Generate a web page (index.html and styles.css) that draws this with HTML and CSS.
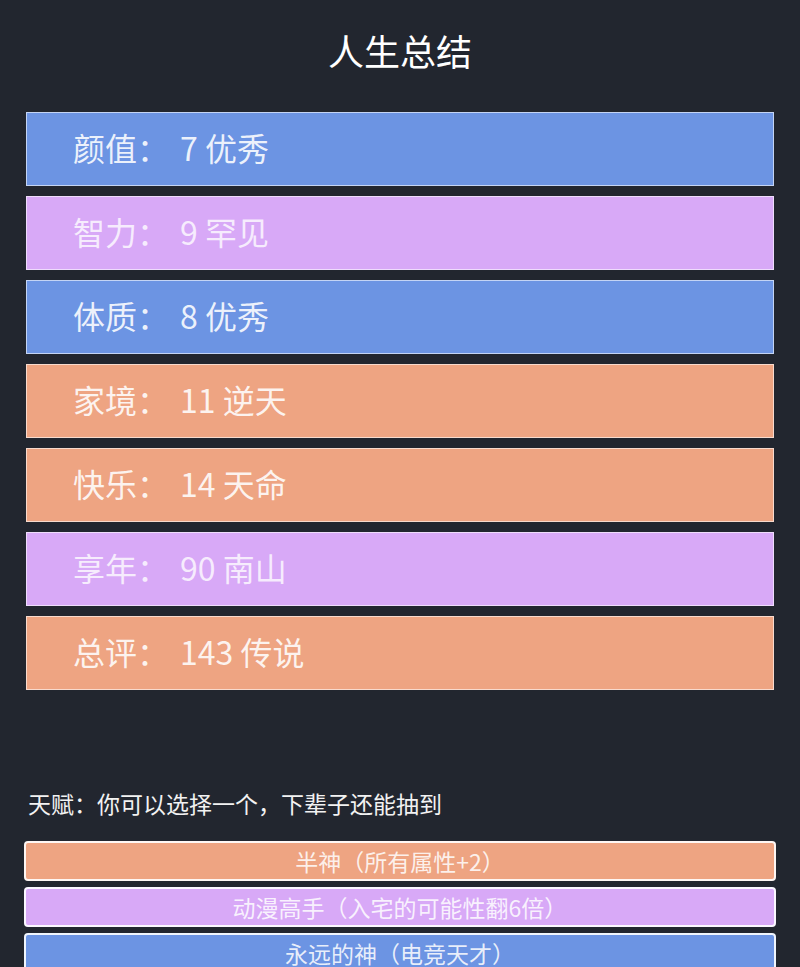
FILE: index.html
```html
<!DOCTYPE html>
<html lang="zh-CN">
<head>
    <meta charset="UTF-8">
    <meta name="viewport" content="width=device-width, initial-scale=1.0">
    <title>人生总结</title>
    <link rel="stylesheet" href="styles.css">
</head>
<body>
    <div class="page">
        <h1 class="title">人生总结</h1>

        <ul class="summary">
            <li class="grade blue">颜值：<span class="val">7 优秀</span></li>
            <li class="grade purple">智力：<span class="val">9 罕见</span></li>
            <li class="grade blue">体质：<span class="val">8 优秀</span></li>
            <li class="grade orange">家境：<span class="val">11 逆天</span></li>
            <li class="grade orange">快乐：<span class="val">14 天命</span></li>
            <li class="grade purple">享年：<span class="val">90 南山</span></li>
            <li class="grade orange">总评：<span class="val">143 传说</span></li>
        </ul>

        <p class="tip">天赋：你可以选择一个，下辈子还能抽到</p>

        <ul class="talents">
            <li class="talent orange">半神（所有属性+2）</li>
            <li class="talent purple">动漫高手（入宅的可能性翻6倍）</li>
            <li class="talent blue">永远的神（电竞天才）</li>
        </ul>
    </div>
</body>
</html>
```

FILE: styles.css
```css
html, body {
    margin: 0;
    padding: 0;
    background-color: #22262f;
}

body {
    font-family: "Noto Sans CJK SC", "Noto Sans", sans-serif;
    color: #fff;
}

.page {
    padding: 0 24px;
}

.title {
    margin: 0;
    padding-top: 24px;
    height: 112px;
    box-sizing: border-box;
    text-align: center;
    font-size: 36px;
    font-weight: 400;
    line-height: 52px;
}

ul {
    list-style: none;
    margin: 0;
    padding: 0;
}

.summary {
    padding: 0 2px;
}

.grade {
    height: 72px;
    margin-bottom: 10px;
    padding-left: 46px;
    border: 1px solid rgba(255, 255, 255, 0.6);
    font-size: 32px;
    line-height: 68px;
    color: rgba(255, 255, 255, 0.88);
}

.grade .val {
    margin-left: 11px;
}

.blue {
    background-color: #6c94e3;
}

.purple {
    background-color: #d8a9f7;
}

.orange {
    background-color: #eea482;
}

.purple.grade {
    color: rgba(255, 255, 255, 0.78);
}

.tip {
    margin: 98px 0 0 4px;
    height: 53px;
    font-size: 23px;
    line-height: 30px;
    color: #f2f2f2;
}

.talent {
    height: 36px;
    margin-bottom: 6px;
    border: 2px solid rgba(255, 255, 255, 0.9);
    border-radius: 4px;
    text-align: center;
    font-size: 23px;
    line-height: 36px;
    color: rgba(255, 255, 255, 0.85);
}
```
